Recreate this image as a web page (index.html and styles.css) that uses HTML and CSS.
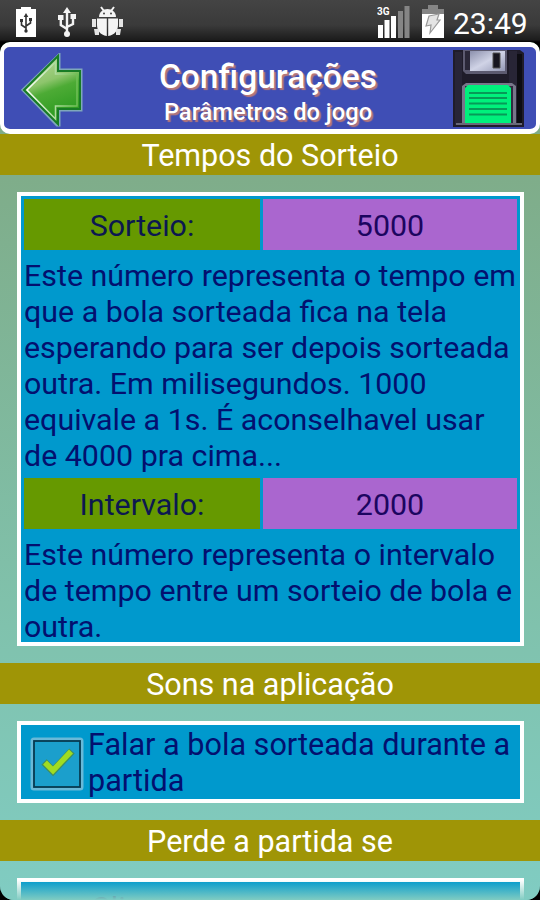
FILE: index.html
```html
<!DOCTYPE html>
<html lang="pt-BR">
<head>
    <meta charset="UTF-8">
    <title>Configurações</title>
    <link rel="stylesheet" href="styles.css">
</head>
<body>

<div id="phone">
    <div class="status">
        <div class="left">
            <svg class="usb-bat" width="20" height="32" viewBox="0 0 20 32">
                <path fill="#fff" d="M5 1h10v2h5v28H0V3h5z"/>
                <path fill="none" stroke="#333" stroke-width="1.6" d="M10 9v17M5.500 15v4l4.500 3M14.500 13v4l-4.500 3"/>
                <circle cx="10" cy="25" r="1.700" fill="#333"/>
                <path fill="#333" d="M10 7l2.300 4H7.700zM4 13h3v3H4zM13 12h3v3h-3z"/>
            </svg>
            <svg class="usb" width="18" height="32" viewBox="0 0 18 32">
                <path fill="none" stroke="#f4f4f4" stroke-width="2.400" d="M9 4v25M2.800 13v6L9 23M15 11v7l-6 3"/>
                <path fill="#f4f4f4" d="M9 1l4 6H5zM0 9h5.500v5H0zM12.500 8H18v5h-5.500z"/>
                <circle cx="9" cy="28" r="3" fill="#f4f4f4"/>
            </svg>
            <svg class="bug" width="32" height="32" viewBox="0 0 32 32">
                <path fill="none" stroke="#f4f4f4" stroke-width="2" d="M9 1l3 4M22 1l-3 4"/>
                <path fill="#f4f4f4" d="M7 11c0-5 4-8 8.500-8s8.500 3 8.500 8z"/>
                <path fill="#f4f4f4" d="M5 12.500h9.800V30C8 29 5 24 5 19zM16.200 12.500H26V19c0 5-3 10-9.800 11z"/>
                <path fill="#e4e4e4" d="M0 13h4v8H0zM27 13h4v8h-4zM2 23h5v6H3zM24 23h5l-1 6h-4z"/>
                <circle cx="12" cy="7.500" r="1" fill="#444"/>
                <circle cx="19" cy="7.500" r="1" fill="#444"/>
            </svg>
        </div>
        <div class="right">
            <svg class="signal" width="34" height="34" viewBox="0 0 34 34">
                <text class="net" x="0" y="10">3G</text>
                <path fill="#fff" d="M1 20h5v13H1zM7.500 15h5v18h-5zM14 11h5v22h-5z"/>
                <path fill="#858585" d="M21 6h5v27h-5zM27.500 1h5v32h-5z"/>
            </svg>
            <svg class="bat" width="22" height="34" viewBox="0 0 22 34">
                <path fill="#858585" d="M6 0h10v4h6v6H0V4h6z"/>
                <path fill="#fff" d="M0 9h22v24H0z"/>
                <path fill="#e4e4e4" stroke="#999" stroke-width="1.200" d="M7 11l10-2-2 6h3L8 28l1-8-5 1z"/>
            </svg>
            <span class="clock">23:49</span>
        </div>
    </div>

    <div class="screen">
        <div class="header">
            <svg class="back" width="62" height="74" viewBox="0 0 62 74">
                <defs>
                    <linearGradient id="arrow" x1="0" y1="0" x2="0.300" y2="1">
                        <stop offset="0" stop-color="#c0dba0"/>
                        <stop offset="0.450" stop-color="#8dc56c"/>
                        <stop offset="0.600" stop-color="#4dab35"/>
                        <stop offset="1" stop-color="#2b9a20"/>
                    </linearGradient>
                    <linearGradient id="shine" x1="0" y1="0" x2="1" y2="0">
                        <stop offset="0" stop-color="#fff"/>
                        <stop offset="1" stop-color="#6fbf55"/>
                    </linearGradient>
                </defs>
                <path fill="none" stroke="#7fa7bb" stroke-width="3" d="M38 2v15h22v40H38v15h-2L2 37z"/>
                <path fill="url(#arrow)" stroke="#177c25" stroke-width="2" d="M37 3v15h22v38H37v15L3 37z"/>
                <path fill="none" stroke="url(#shine)" stroke-width="1.500" d="M34.500 66L6 37 34.500 9v12H56v32H34.500z"/>
            </svg>
            <div class="title">
                <h1>Configurações</h1>
                <h2>Parâmetros do jogo</h2>
            </div>
            <svg class="save" width="72" height="78" viewBox="0 0 72 78">
                <defs>
                    <linearGradient id="metal" x1="0" y1="0" x2="1" y2="1">
                        <stop offset="0" stop-color="#8c90ad"/>
                        <stop offset="0.500" stop-color="#d0d3e6"/>
                        <stop offset="1" stop-color="#9498b5"/>
                    </linearGradient>
                </defs>
                <path fill="#1f1c2a" d="M0 1h67l4 3v74H0z"/>
                <path fill="#282536" d="M2 3h7v73H2zM56 2h8v74h-8z"/>
                <path fill="#0d0c12" d="M64 5h5v70h-5z"/>
                <path fill="#5c5a70" d="M10 1h44v24H13l-3-3z"/>
                <path fill="#2a2738" d="M12 2h5v19h-5z"/>
                <path fill="url(#metal)" d="M17 2h35v20H17z"/>
                <path fill="#17151f" stroke="#555" d="M40 4h7v15h-7z"/>
                <path fill="#77768a" d="M9 37l4-3h46l4 3v39H9z"/>
                <path fill="#302c40" d="M12 37h48v38H12z"/>
                <path fill="#00f07c" d="M12 39l3-3h40l3 3v35H12z"/>
                <path fill="none" stroke="#079a58" stroke-width="2" d="M16 44h38M16 49h38M16 54.500h38M16 60h38M16 65.500h38"/>
                <path fill="#696879" d="M3 74h66v2H3z"/>
            </svg>
        </div>

        <div class="band">Tempos do Sorteio</div>
        <div class="box times">
            <div class="row">
                <div class="name">Sorteio:</div>
                <div class="value">5000</div>
            </div>
            <p>Este número representa o tempo em<br>que a bola sorteada fica na tela<br>esperando para ser depois sorteada<br>outra. Em milisegundos. 1000<br>equivale a 1s. É aconselhavel usar<br>de 4000 pra cima...</p>
            <div class="row">
                <div class="name">Intervalo:</div>
                <div class="value">2000</div>
            </div>
            <p>Este número representa o intervalo<br>de tempo entre um sorteio de bola e<br>outra.</p>
        </div>

        <div class="band">Sons na aplicação</div>
        <div class="box check">
            <svg class="tick" width="54" height="54" viewBox="0 0 54 54">
                <rect x="2" y="2" width="50" height="50" rx="2" fill="#1da0cc" stroke="#69b9d8" stroke-width="3"/>
                <rect x="4" y="4" width="46" height="46" fill="#1b9fcc" stroke="#073a50" stroke-width="1.800"/>
                <path fill="none" stroke="#3f8f60" stroke-width="7.500" d="M14 25l9 9 19-20"/>
                <path fill="none" stroke="#a0dc22" stroke-width="5.500" d="M15 25.500l8 8 18-19"/>
            </svg>
            <p>Falar a bola sorteada durante a<br>partida</p>
        </div>

        <div class="band">Perde a partida se</div>
        <div class="box next">
            <p>Clicar</p>
        </div>
    </div>
</div>

</body>
</html>
```
FILE: styles.css
```css
* {
    margin: 0;
    padding: 0;
    box-sizing: border-box;
}

body {
    background: #000;
    font-family: Roboto, sans-serif;
}

#phone {
    width: 540px;
    height: 900px;
    overflow: hidden;
    display: flex;
    flex-direction: column;
}

/* status bar */
.status {
    height: 42px;
    flex: none;
    display: flex;
    justify-content: space-between;
    background: linear-gradient(#444, #3a3a3a 60%, #1c1c1c 95%, #000);
    color: #fff;
}
.status .left {
    display: flex;
    padding: 6px 0 0 16px;
}
.usb {
    margin-left: 22px;
}
.bug {
    margin-left: 16px;
}
.status .right {
    display: flex;
    padding: 5px 13px 0 0;
}
.net {
    font-size: 10px;
    font-weight: bold;
    fill: #fff;
}
.bat {
    margin-left: 11px;
}
.clock {
    width: 74px;
    margin-left: 9px;
    font-size: 30px;
    line-height: 37px;
    white-space: nowrap;
}

.screen {
    height: 858px;
    border-radius: 10px 10px 14px 14px;
    background: linear-gradient(#80ab82, #7fad8a 16%, #80c2ad 68%, #80ccc2);
    overflow: hidden;
    position: relative;
}
/* fading edge of the scroll area */
.screen:after {
    content: "";
    position: absolute;
    left: 0;
    right: 0;
    bottom: 0;
    height: 20px;
    background: linear-gradient(rgba(128,204,194,0), #80ccc2);
}

.header {
    height: 92px;
    border: 5px solid #fff;
    border-width: 5px 4px;
    border-radius: 10px;
    background: #3f4eb5;
    display: flex;
    justify-content: space-between;
    padding: 2px 11px 0 17px;
}
.back {
    margin-top: 4px;
}
.title {
    color: #fff;
    text-align: center;
    text-shadow: 2px 2px 1px #b87878;
}
.title h1 {
    font-size: 33.6px;
    font-weight: 500;
    line-height: 38px;
    margin-top: 9px;
}
.title h2 {
    font-size: 23.7px;
    font-weight: 500;
    line-height: 32px;
}

.band {
    height: 41px;
    line-height: 44px;
    background: #9f9506;
    color: #fff;
    font-size: 30.5px;
    text-align: center;
}

.box {
    width: 507px;
    margin: 17px 0 17px 17px;
    border: 4px solid #fff;
    background: #0099cd;
    color: #03106f;
    font-size: 30.4px;
    line-height: 36px;
    white-space: nowrap;
}
.box p {
    padding: 8px 0 4px 3px;
}
.times {
    height: 454px;
    padding-top: 3px;
}
.row {
    display: flex;
    gap: 3px;
    height: 51px;
    padding: 0 3px;
    line-height: 54px;
    text-align: center;
}
.name {
    width: 236px;
    background: #669900;
    color: #0c1850;
}
.value {
    flex: 1;
    background: #aa66cf;
    color: #1c0560;
}

.check {
    height: 82px;
    display: flex;
    padding: 12px 0 0 9px;
    font-size: 30.6px;
}
.check p {
    padding: 0;
    margin: -10px 0 0 4px;
}
.next {
    height: 60px;
    margin-bottom: 0;
}
.next p {
    padding: 8px 0 0 70px;
}
```
